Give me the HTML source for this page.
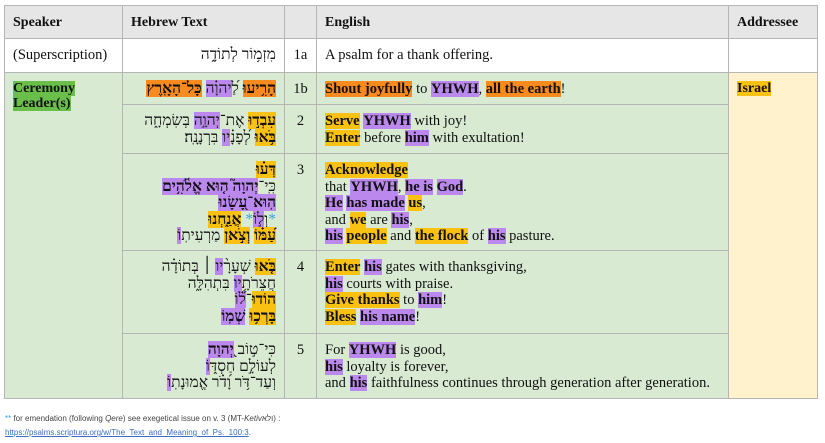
<!DOCTYPE html>
<html><head><meta charset="utf-8">
<style>
body{margin:0;width:825px;height:443px;background:#fff;position:relative;overflow:hidden;font-family:"Liberation Serif",serif;color:#111}
.c{position:absolute;box-sizing:border-box;border:1px solid #b5b5b5;padding:6px 8px;font-size:14.5px;line-height:16.6px}
.h{background:#e6e6e6;font-weight:bold;font-size:14px;padding-top:9px}
.g{background:#d9ead3}
.w{background:#fff}
.he{direction:rtl;text-align:right;font-family:"Liberation Serif","DejaVu Sans",serif;font-size:15.5px;line-height:16.6px}
.n{text-align:center}
.y{background:#f9c112;font-weight:bold}
.p{background:#bb88ee;font-weight:bold}
.o{background:#f98a1e;font-weight:bold}
.pp{background:#bb88ee}
.foot{position:absolute;left:5px;top:412px;font-family:"Liberation Sans",sans-serif;font-size:8px;color:#444;line-height:14px}
.foot a{color:#3a6fc4;text-decoration:underline}
</style></head><body>
<div class="c h" style="left:4px;top:5px;width:119px;height:34px">Speaker</div>
<div class="c h" style="left:122px;top:5px;width:163px;height:34px">Hebrew Text</div>
<div class="c h" style="left:284px;top:5px;width:33px;height:34px"></div>
<div class="c h" style="left:316px;top:5px;width:413px;height:34px">English</div>
<div class="c h" style="left:728px;top:5px;width:90px;height:34px">Addressee</div>
<div class="c w" style="left:4px;top:38px;width:119px;height:35px;padding-top:8px">(Superscription)</div>
<div class="c w he" style="left:122px;top:38px;width:163px;height:35px;padding-top:8px">מִזְמ֥וֹר לְתוֹדָ֑ה</div>
<div class="c w n" style="left:284px;top:38px;width:33px;height:35px;padding:8px 0 0">1a</div>
<div class="c w" style="left:316px;top:38px;width:413px;height:35px;padding-top:8px">A psalm for a thank offering.</div>
<div class="c w" style="left:728px;top:38px;width:90px;height:35px"></div>
<div class="c g" style="left:4px;top:72px;width:119px;height:327px;font-weight:bold;font-size:14px;line-height:15px;padding-top:8px"><span style="background:#6abf4b">Ceremony<br>Leader(s)</span></div>
<div class="c" style="left:728px;top:72px;width:90px;height:327px;background:#fff2cc;font-weight:bold;font-size:14px;padding-top:8px"><span style="background:#f9c112">Israel</span></div>
<div class="c g he" style="left:122px;top:72px;width:163px;height:33px;padding-top:8px"><span class="o">הָרִ֥יעוּ</span> לַ֝<span class="pp">יהוָ֗ה</span> <span class="o">כָּל־הָאָֽרֶץ</span>׃</div>
<div class="c g n" style="left:284px;top:72px;width:33px;height:33px;padding:8px 0 0">1b</div>
<div class="c g" style="left:316px;top:72px;width:413px;height:33px;padding-top:8px"><span class="o">Shout joyfully</span> to <span class="p">YHWH</span>, <span class="o">all the earth</span>!</div>
<div class="c g he" style="left:122px;top:104px;width:163px;height:50px;padding-top:8px"><span class="y">עִבְד֣וּ</span> אֶת־<span class="pp">יְהוָ֣ה</span> בְּשִׂמְחָ֑ה<br><span class="y">בֹּ֥אוּ</span> לְ֝פָנָ֗<span class="pp">יו</span> בִּרְנָנָֽה׃</div>
<div class="c g n" style="left:284px;top:104px;width:33px;height:50px;padding:8px 0 0">2</div>
<div class="c g" style="left:316px;top:104px;width:413px;height:50px;padding-top:8px"><span class="y">Serve</span> <span class="p">YHWH</span> with joy!<br><span class="y">Enter</span> before <span class="p">him</span> with exultation!</div>
<div class="c g he" style="left:122px;top:153px;width:163px;height:98px;padding-top:8px"><span class="y">דְּע֗וּ</span><br>כִּֽי־<span class="p">יְהוָה֮ ה֤וּא אֱלֹ֫הִ֥ים</span><br><span class="p">הֽוּא־עָ֭שָׂנוּ</span><br><span style="color:#3aa0e0">*</span>וְ<span class="pp">ל֣וֹ</span><span style="color:#3aa0e0">*</span> <span class="y">אֲנַ֑חְנוּ</span><br><span class="y">עַ֝מּ֗וֹ</span> <span class="y">וְצֹ֣אן</span> מַרְעִית<span class="pp">ֽוֹ</span>׃</div>
<div class="c g n" style="left:284px;top:153px;width:33px;height:98px;padding:8px 0 0">3</div>
<div class="c g" style="left:316px;top:153px;width:413px;height:98px;padding-top:8px"><span class="y">Acknowledge</span><br>that <span class="p">YHWH</span>, <span class="p">he is</span> <span class="p">God</span>.<br><span class="p">He</span> <span class="p">has made</span> <span class="y">us</span>,<br>and <span class="y">we</span> are <span class="p">his</span>,<br><span class="p">his</span> <span class="y">people</span> and <span class="y">the flock</span> of <span class="p">his</span> pasture.</div>
<div class="c g he" style="left:122px;top:250px;width:163px;height:84px;padding-top:8px"><span class="y">בֹּ֤אוּ</span> שְׁעָרָ֨<span class="pp">יו</span> ׀ בְּתוֹדָ֗ה<br>חֲצֵרֹתָ֥<span class="pp">יו</span> בִּתְהִלָּ֑ה<br><span class="y">הוֹדוּ</span>־<span class="pp">ל֝֗וֹ</span><br><span class="y">בָּרְכ֥וּ</span> <span class="p">שְׁמֽוֹ</span>׃</div>
<div class="c g n" style="left:284px;top:250px;width:33px;height:84px;padding:8px 0 0">4</div>
<div class="c g" style="left:316px;top:250px;width:413px;height:84px;padding-top:8px"><span class="y">Enter</span> <span class="p">his</span> gates with thanksgiving,<br><span class="p">his</span> courts with praise.<br><span class="y">Give thanks</span> to <span class="p">him</span>!<br><span class="y">Bless</span> <span class="p">his name</span>!</div>
<div class="c g he" style="left:122px;top:333px;width:163px;height:66px;padding-top:8px">כִּי־ט֣וֹב <span class="p">יְ֭הוָה</span><br>לְעוֹלָ֣ם חַסְדּ<span class="pp">֑וֹ</span><br>וְעַד־דֹּ֥ר וָ֝דֹ֗ר אֱמוּנָת<span class="pp">ֽוֹ</span>׃</div>
<div class="c g n" style="left:284px;top:333px;width:33px;height:66px;padding:8px 0 0">5</div>
<div class="c g" style="left:316px;top:333px;width:413px;height:66px;padding-top:8px;white-space:nowrap">For <span class="p">YHWH</span> is good,<br><span class="p">his</span> loyalty is forever,<br>and <span class="p">his</span> faithfulness continues through generation after generation.</div>
<div class="foot"><span style="color:#3aa0e0">**</span> for emendation (following <i>Qere</i>) see exegetical issue on v. 3 (MT-<i>Ketiv</i>ולא) :<br><a>https://psalms.scriptura.org/w/The_Text_and_Meaning_of_Ps._100:3</a>.</div>
</body></html>
